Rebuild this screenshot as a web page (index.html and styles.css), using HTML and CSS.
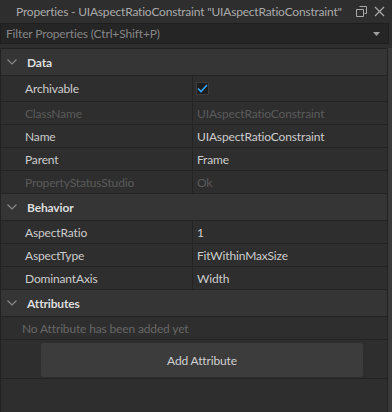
FILE: index.html
```html
<!DOCTYPE html>
<html lang="en">
<head>
    <meta charset="utf-8">
    <title>Properties</title>
    <link rel="stylesheet" href="styles.css">
</head>
<body>
    <div id="window">
        <div id="titleBar">
            <div class="title">Properties - UIAspectRatioConstraint "UIAspectRatioConstraint"</div>
            <div class="title-buttons">
                <svg width="11" height="11" viewBox="0 0 11 11">
                    <path d="M3.5 0.5h7v7h-2M0.5 3.5h7v7h-7z" fill="none" stroke="#a8a8a8" stroke-width="1"/>
                </svg>
                <svg width="11" height="11" viewBox="0 0 11 11">
                    <path d="M1 1L10 10M10 1L1 10" stroke="#a8a8a8" stroke-width="1.3"/>
                </svg>
            </div>
        </div>
        <div id="filterBox">
            <span class="placeholder">Filter Properties (Ctrl+Shift+P)</span>
            <svg width="7" height="4" viewBox="0 0 7 4"><path d="M0 0h7L3.5 4z" fill="#a0a0a0"/></svg>
        </div>
        <div id="panel">
            <div id="propertyList">
                <div class="section">
                    <svg class="chevron" width="10" height="6" viewBox="0 0 10 6"><path d="M0.5 0.5L5 5L9.5 0.5" fill="none" stroke="#8a8a8a" stroke-width="1.2"/></svg>
                    <span>Data</span>
                </div>
                <div class="row tall">
                    <div class="name">Archivable</div>
                    <div class="value">
                        <span class="checkbox">
                            <svg width="11" height="9" viewBox="0 0 11 9"><path d="M1 4.5L4 7.5L10 1" fill="none" stroke="#35a7ff" stroke-width="1.6"/></svg>
                        </span>
                    </div>
                </div>
                <div class="row disabled">
                    <div class="name">ClassName</div>
                    <div class="value">UIAspectRatioConstraint</div>
                </div>
                <div class="row">
                    <div class="name">Name</div>
                    <div class="value">UIAspectRatioConstraint</div>
                </div>
                <div class="row">
                    <div class="name">Parent</div>
                    <div class="value">Frame</div>
                </div>
                <div class="row disabled">
                    <div class="name">PropertyStatusStudio</div>
                    <div class="value">Ok</div>
                </div>
                <div class="section">
                    <svg class="chevron" width="10" height="6" viewBox="0 0 10 6"><path d="M0.5 0.5L5 5L9.5 0.5" fill="none" stroke="#8a8a8a" stroke-width="1.2"/></svg>
                    <span>Behavior</span>
                </div>
                <div class="row">
                    <div class="name">AspectRatio</div>
                    <div class="value">1</div>
                </div>
                <div class="row">
                    <div class="name">AspectType</div>
                    <div class="value">FitWithinMaxSize</div>
                </div>
                <div class="row">
                    <div class="name">DominantAxis</div>
                    <div class="value">Width</div>
                </div>
                <div class="section">
                    <svg class="chevron" width="10" height="6" viewBox="0 0 10 6"><path d="M0.5 0.5L5 5L9.5 0.5" fill="none" stroke="#8a8a8a" stroke-width="1.2"/></svg>
                    <span>Attributes</span>
                </div>
                <div class="empty-note">No Attribute has been added yet</div>
                <div class="button-row">
                    <button class="add-button">Add Attribute</button>
                </div>
            </div>
            <div id="scrollTrack"></div>
        </div>
    </div>
</body>
</html>
```

FILE: styles.css
```css
body {
    margin: 0;
    padding: 0;
    background-color: #2e2e2e;
    color: #cccccc;
    font-family: Lato, "Open Sans", sans-serif;
    font-size: 12px;
    letter-spacing: -0.15px;
    overflow: hidden;
}

#window {
    display: flex;
    flex-direction: column;
    width: 392px;
    height: 412px;
}

#titleBar {
    display: flex;
    align-items: center;
    justify-content: space-between;
    height: 23px;
    padding: 0 7px 0 16px;
    box-sizing: border-box;
    background-color: #2e2e2e;
    color: #aaaaaa;
    font-size: 12px;
    letter-spacing: -0.2px;
    white-space: nowrap;
}

.title-buttons {
    display: flex;
    gap: 7px;
    align-items: center;
}

#filterBox {
    display: flex;
    align-items: center;
    justify-content: space-between;
    height: 21px;
    margin-right: 3px;
    padding: 0 8px 0 5px;
    box-sizing: border-box;
    background-color: #252525;
    border: 1px solid #1e1e1e;
    color: #858585;
}

#panel {
    flex: 1;
    display: flex;
    margin-top: 4px;
}

#propertyList {
    flex: 1;
    border-left: 1px solid #222222;
    border-right: 1px solid #222222;
    border-top: 1px solid #222222;
}

#scrollTrack {
    width: 4px;
    background-color: #3a3a3a;
}

.section {
    display: flex;
    align-items: center;
    height: 26px;
    background-color: #353535;
    border-bottom: 1px solid #232323;
    color: #dddddd;
    font-weight: bold;
}

.chevron {
    margin: 0 10px 0 6px;
}

.row {
    display: flex;
    height: 22px;
    border-bottom: 1px solid #232323;
}

.row.tall {
    height: 25px;
}

.name {
    width: 192px;
    padding-left: 24px;
    box-sizing: border-box;
    border-right: 1px solid #232323;
    display: flex;
    align-items: center;
}

.value {
    flex: 1;
    padding-left: 4px;
    display: flex;
    align-items: center;
}

.row.disabled {
    color: #5a5a5a;
}

.checkbox {
    display: flex;
    align-items: center;
    justify-content: center;
    width: 11px;
    height: 11px;
    margin-left: -1px;
    background-color: #1e1e1e;
    border: 1px solid #3c3c3c;
}

.empty-note {
    height: 22px;
    display: flex;
    align-items: center;
    padding-left: 21px;
    color: #676767;
    border-bottom: 1px solid #232323;
}

.button-row {
    height: 39px;
    padding: 3px 24px 0 40px;
    box-sizing: border-box;
    border-bottom: 1px solid #232323;
}

.add-button {
    width: 100%;
    height: 34px;
    background-color: #3c3c3c;
    color: #d0d0d0;
    border: none;
    border-radius: 3px;
    font-family: inherit;
    font-size: 12px;
    letter-spacing: -0.15px;
}
```
